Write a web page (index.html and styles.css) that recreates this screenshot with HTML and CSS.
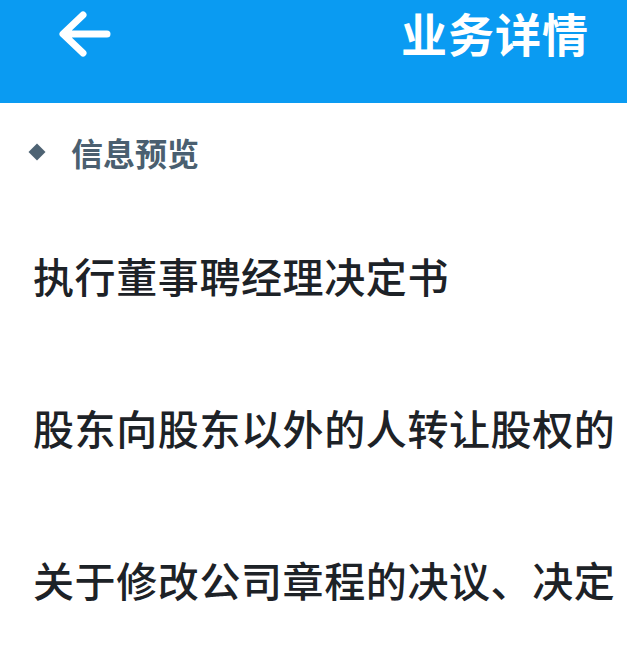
FILE: index.html
```html
<!DOCTYPE html>
<html lang="zh">
<head>
<meta charset="utf-8">
<link rel="stylesheet" href="styles.css">
</head>
<body>
<header class="bar">
  <svg class="back" viewBox="0 0 56 50" width="56" height="50">
    <path d="M50 25 H8 M26 6 L6 25 L26 44" fill="none" stroke="#fff" stroke-width="7" stroke-linecap="round" stroke-linejoin="round"/>
  </svg>
  <h1 class="title">业务详情</h1>
</header>
<section class="sec">
  <div class="sec-head"><span class="diamond"></span><span class="sec-title">信息预览</span></div>
  <ul class="list">
    <li class="item">执行董事聘经理决定书</li>
    <li class="item">股东向股东以外的人转让股权的</li>
    <li class="item">关于修改公司章程的决议、决定</li>
  </ul>
</section>
</body>
</html>
```
FILE: styles.css
```css
html, body { margin: 0; padding: 0; background: #fff; overflow: hidden; }
body { width: 627px; height: 667px; font-family: "Noto Sans CJK SC", "Noto Sans", sans-serif; }
.bar {
  height: 103px; background: #0a9bf2;
  display: flex; align-items: flex-start; justify-content: space-between;
  padding: 0 38px 0 57px; box-sizing: border-box;
}
.back { margin-top: 9px; }
.title {
  margin: 0; color: #fff; font-size: 46px; font-weight: 700; line-height: 64px;
  letter-spacing: 1px;
}
.sec { padding: 25px 0 0 28px; }
.sec-head { display: flex; align-items: center; height: 48px; }
.diamond { width: 12px; height: 12px; background: #4e6373; transform: rotate(45deg); margin-right: 28px; margin-left: 3px; }
.sec-title { color: #4a5f70; font-size: 32px; font-weight: 700; line-height: 1; }
.list { list-style: none; margin: 0; padding: 23px 0 0 0; }
.item {
  height: 152px; display: flex; align-items: center;
  font-size: 41px; font-weight: 500; color: #1d2227; white-space: nowrap;
  padding-left: 5px; letter-spacing: 0.6px;
}
```
